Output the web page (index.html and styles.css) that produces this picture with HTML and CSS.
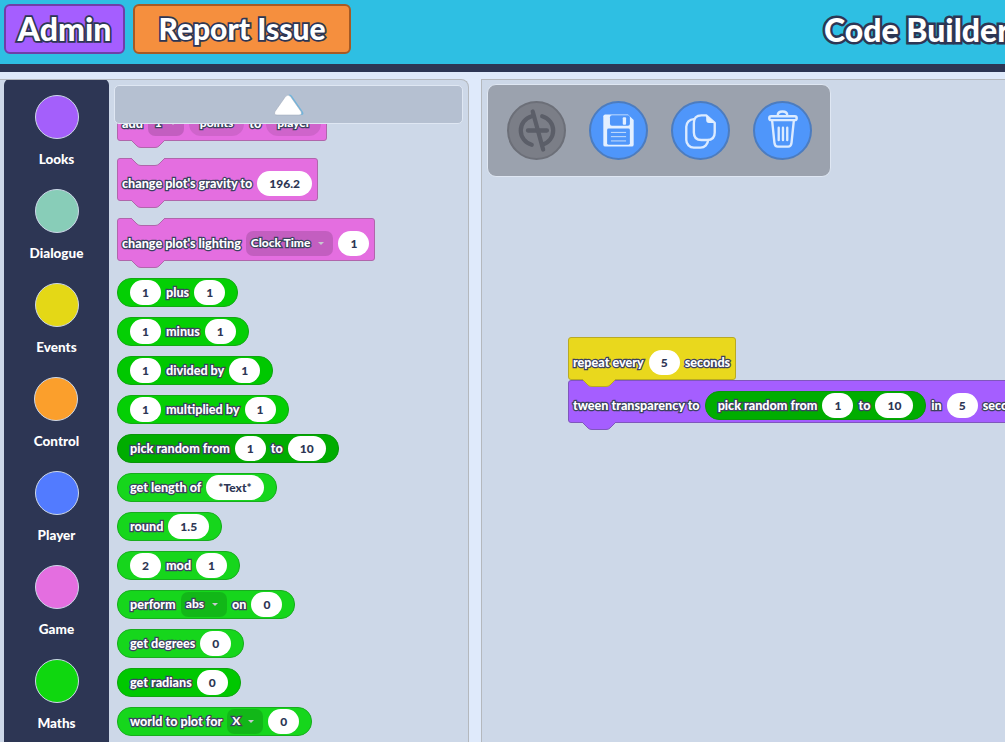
FILE: index.html
```html
<!DOCTYPE html>
<html lang="en">
<head>
  <meta charset="UTF-8">
  <title>Code Builder</title>
  <link rel="stylesheet" href="styles.css">
</head>
<body>
  <svg class="defs" width="0" height="0">
    <symbol id="tab" viewBox="0 0 34 8"><path d="M0 0 L6 6 Q7.5 7.5 10 7.5 H24 Q26.5 7.5 28 6 L34 0"/></symbol>
  </svg>

  <header class="topbar">
    <button class="top-btn admin">Admin</button>
    <button class="top-btn report">Report Issue</button>
    <h1 class="title">Code Builder</h1>
  </header>
  <div class="stripe"></div>

  <main class="main">
    <section class="panel library">
      <nav class="cats">
        <a class="cat"><span class="dot looks"></span>Looks</a>
        <a class="cat"><span class="dot dialogue"></span>Dialogue</a>
        <a class="cat"><span class="dot events"></span>Events</a>
        <a class="cat"><span class="dot control"></span>Control</a>
        <a class="cat"><span class="dot player"></span>Player</a>
        <a class="cat"><span class="dot game"></span>Game</a>
        <a class="cat"><span class="dot maths"></span>Maths</a>
      </nav>

      <div class="palette">
        <div class="block stack pink">
          <span class="lbl">add</span><span class="drop short">1<i class="caret"></i></span><span class="drop slot">points</span><span class="lbl">to</span><span class="drop slot">player</span>
          <svg class="tab"><use href="#tab"/></svg>
        </div>
        <div class="block stack pink">
          <svg class="notch"><use href="#tab"/></svg>
          <span class="lbl">change plot's gravity to</span><span class="num">196.2</span>
          <svg class="tab"><use href="#tab"/></svg>
        </div>
        <div class="block stack pink">
          <svg class="notch"><use href="#tab"/></svg>
          <span class="lbl">change plot's lighting</span><span class="drop wide">Clock Time<i class="caret"></i></span><span class="num">1</span>
          <svg class="tab"><use href="#tab"/></svg>
        </div>

        <div class="block pill g1"><span class="num">1</span><span class="lbl">plus</span><span class="num">1</span></div>
        <div class="block pill g1"><span class="num">1</span><span class="lbl">minus</span><span class="num">1</span></div>
        <div class="block pill g2"><span class="num">1</span><span class="lbl">divided by</span><span class="num">1</span></div>
        <div class="block pill g1"><span class="num">1</span><span class="lbl">multiplied by</span><span class="num">1</span></div>
        <div class="block pill g3"><span class="lbl">pick random from</span><span class="num">1</span><span class="lbl">to</span><span class="num">10</span></div>
        <div class="block pill g4"><span class="lbl">get length of</span><span class="num">*Text*</span></div>
        <div class="block pill g4"><span class="lbl">round</span><span class="num">1.5</span></div>
        <div class="block pill g4"><span class="num">2</span><span class="lbl">mod</span><span class="num">1</span></div>
        <div class="block pill g4"><span class="lbl">perform</span><span class="drop">abs<i class="caret"></i></span><span class="lbl">on</span><span class="num">0</span></div>
        <div class="block pill g4"><span class="lbl">get degrees</span><span class="num">0</span></div>
        <div class="block pill g2"><span class="lbl">get radians</span><span class="num">0</span></div>
        <div class="block pill g4"><span class="lbl">world to plot for</span><span class="drop">X<i class="caret"></i></span><span class="num">0</span></div>
      </div>

      <button class="scroll-up" aria-label="Scroll up">
        <svg width="32" height="24" viewBox="0 0 32 24">
          <path class="arrow-edge" d="M14 3 Q17 0 19 3 L30 19 Q31.500 22 28 22 H5 Z"/>
          <path class="arrow-face" d="M12.500 3.500 Q15 0.500 17.500 3.500 L28 18.500 Q29.500 22 26 22 H4 Q0.500 22 2 18.500 Z"/>
        </svg>
      </button>
    </section>

    <section class="panel canvas">
      <div class="tools">
        <button class="tool off" aria-label="Link">
          <svg viewBox="0 0 58 58"><path d="M24 14 A15.500 15.500 0 0 0 24 44 M35 14 A15.500 15.500 0 0 1 35 44 M20 29 H40"/><path d="M25 9 L36 49"/></svg>
        </button>
        <button class="tool" aria-label="Save">
          <svg viewBox="0 0 58 58">
            <path class="solid" d="M15 12 H39 L45 18 V44 Q45 46 43 46 H15 Q13 46 13 44 V14 Q13 12 15 12 Z"/>
            <rect class="hole" x="20" y="13" width="21" height="11" rx="2"/>
            <rect class="solid" x="33.500" y="15" width="3.500" height="8" rx="1"/>
            <rect class="hole" x="17" y="27" width="24" height="17" rx="1.500"/>
            <path class="thin" d="M21 31 H37 M21 35.500 H37 M21 40 H37"/>
          </svg>
        </button>
        <button class="tool" aria-label="Copy">
          <svg viewBox="0 0 58 58">
            <rect class="line" x="14" y="17" width="23" height="30" rx="8"/>
            <path class="line front" d="M30 13 H35 L44 21 V31 Q44 39 36 39 H30 Q22 39 22 31 V21 Q22 13 30 13 Z"/>
            <path class="solid" d="M35 13 L44 21 H38 Q35 21 35 18 Z"/>
          </svg>
        </button>
        <button class="tool" aria-label="Delete">
          <svg viewBox="0 0 58 58">
            <path class="line" d="M24 13 Q24 9 29 9 Q34 9 34 13"/>
            <rect class="line" x="15" y="14" width="29" height="4" rx="2"/>
            <path class="line" d="M18 18 L20.500 42 Q21 46 24 46 H35 Q38 46 38.500 42 L41 18"/>
            <path class="line" d="M25 26 V39 M29.500 26 V39 M34 26 V39"/>
          </svg>
        </button>
      </div>

      <div class="script">
        <div class="block stack yellow hat">
          <span class="lbl">repeat every</span><span class="num">5</span><span class="lbl">seconds</span>
          <svg class="tab"><use href="#tab"/></svg>
        </div>
        <div class="block stack purple">
          <span class="lbl">tween transparency to</span>
          <div class="block pill g3 nested"><span class="lbl">pick random from</span><span class="num">1</span><span class="lbl">to</span><span class="num">10</span></div>
          <span class="lbl">in</span><span class="num">5</span><span class="lbl">seconds</span>
          <svg class="tab"><use href="#tab"/></svg>
        </div>
      </div>
    </section>
  </main>
</body>
</html>
```

FILE: styles.css
```css
* { box-sizing: border-box; }
html, body { height: 100%; }
body { margin: 0; overflow: hidden; display: flex; flex-direction: column; background: #dfeafb; font-family: Lato, "Open Sans", sans-serif; font-weight: 900; }
button { font-family: inherit; font-weight: inherit; padding: 0; cursor: pointer; }
.defs { position: absolute; }

/* header */
.topbar { height: 64px; flex: none; display: flex; align-items: flex-start; gap: 8px; padding: 4px; background: #2ebfe3; overflow: hidden; }
.top-btn { height: 50px; flex: none; padding-bottom: 2px; border-radius: 6px; border: 2px solid; color: #fff; font-size: 30px; -webkit-text-stroke: 3.5px #2d3654; paint-order: stroke fill; }
.admin { width: 121px; font-size: 32px; background: #a55eff; border-color: #6f3fa8; }
.report { width: 218px; background: #f58f3e; border-color: #a65a24; }
.title { flex: none; margin: 6px 0 0 465px; font-size: 32px; font-weight: 900; color: #fff; white-space: nowrap; -webkit-text-stroke: 5px #2d3654; paint-order: stroke fill; }
.stripe { height: 8px; flex: none; background: #2d3654; }

/* panels */
.main { flex: 1; min-height: 0; display: flex; gap: 12px; padding-top: 7px; }
.panel { position: relative; background: #cdd8e8; border: 1px solid #b4b8bd; border-bottom: 0; border-radius: 6px 6px 0 0; overflow: hidden; }
.library { width: 469px; flex: none; display: flex; border-left: 0; border-radius: 0 8px 0 0; padding-left: 4px; }
.canvas { flex: 1; border-right: 0; border-radius: 0; }

/* category list */
.cats { width: 105px; flex: none; margin-top: -1px; display: flex; flex-direction: column; align-items: center; gap: 21px; padding-top: 16px; background: #2d3654; border-radius: 6px 6px 0 0; }
.cat { display: flex; flex-direction: column; align-items: center; gap: 12px; color: #fff; font-size: 13.5px; line-height: 16px; height: 73px; }
.dot { width: 44px; height: 44px; flex: none; border-radius: 50%; border: 1px solid #cdd8e8; }
.looks { background: #a45ffb; }
.dialogue { background: #88cdb8; }
.events { background: #e4d816; }
.control { background: #fb9f2c; }
.player { background: #527bff; }
.game { background: #e46ee0; }
.maths { background: #0fd70f; }

/* block palette */
.palette { flex: 1; display: flex; flex-direction: column; align-items: flex-start; gap: 10px; padding: 18px 0 0 8px; }
.palette .stack { margin-bottom: 7px; }
.scroll-up { position: absolute; z-index: 3; left: 114px; top: 5px; width: 349px; height: 39px; display: flex; align-items: center; justify-content: center; background: #b5c0d1; border: 1px solid #dfe7f3; border-radius: 5px; }
.arrow-edge { fill: #6fb4dc; }
.arrow-face { fill: #fff; stroke: #9aa4b4; stroke-width: 0.5; }

/* blocks */
.block { position: relative; flex: none; display: inline-flex; align-items: center; gap: 5px; border: 1px solid var(--edge); background: var(--fill); font-size: 12px; white-space: nowrap; }
.lbl { color: #fff; font-size: 12.6px; -webkit-text-stroke: 2.5px #3d4260; paint-order: stroke fill; }
.num { height: 25px; min-width: 31px; padding: 0 12px; display: flex; align-items: center; justify-content: center; border-radius: 13px; background: #fff; color: #2d3654; }
.drop { height: 25px; display: flex; align-items: center; gap: 8px; padding: 0 9px 2px 5px; border-radius: 7px; background: rgba(0, 0, 0, 0.14); color: #fff; -webkit-text-stroke: 2.5px #3d4260; paint-order: stroke fill; }
.short { padding: 0 8px 2px 7px; gap: 8px; }
.slot { padding: 0 11px 2px; border-radius: 12px; background: rgba(0, 0, 0, 0.09); }
.caret { width: 0; height: 0; margin-top: 2px; border: 3px solid transparent; border-top: 3px solid #c8c8d0; border-bottom: 0; -webkit-text-stroke: 0; }

.stack { height: 43px; padding: 8px 5px 0 4px; border-radius: 3px; z-index: 1; }
.pill { height: 29px; padding: 0 12px; border-radius: 14px; }
.tab, .notch { position: absolute; left: 13px; width: 34px; height: 8px; overflow: visible; }
.tab { bottom: -8px; fill: var(--fill); stroke: var(--edge); stroke-width: 1; }
.notch { top: -1px; fill: #cdd8e8; stroke: var(--edge); stroke-width: 1; }

.pink { --fill: #e46ee0; --edge: #b066ab; }
.yellow { --fill: #e9d81d; --edge: #b8a924; }
.purple { --fill: #a55eff; --edge: #7f57bc; }
.g1 { --fill: #04cf04; --edge: #14a814; }
.g2 { --fill: #00c800; --edge: #10a510; }
.g3 { --fill: #00ad00; --edge: #0a940a; }
.g4 { --fill: #16d61c; --edge: #18ad1e; }

/* workspace */
.tools { position: absolute; left: 5px; top: 4px; width: 344px; height: 93px; display: flex; align-items: center; gap: 23px; padding-left: 19px; background: #9ba2ae; border: 1px solid #dfe7f3; border-radius: 9px; }
.tool { width: 59px; height: 59px; flex: none; border-radius: 50%; border: 2px solid #4c7cbf; background: #4f96fa; }
.tool svg { display: block; width: 55px; height: 55px; fill: none; }
.solid { fill: #e4f0ff; }
.hole { fill: #4f96fa; }
.thin { stroke: #cfe2fb; stroke-width: 1; }
.line { stroke: #dcebff; stroke-width: 2.5; fill: none; stroke-linecap: round; stroke-linejoin: round; }
.front { fill: #4f96fa; }
.off { background: #7b7e87; border-color: #6c6f78; }
.off path { stroke: #5b5e68; stroke-width: 4.500; stroke-linecap: round; fill: none; }

.script { position: absolute; left: 86px; top: 257px; display: flex; flex-direction: column; align-items: flex-start; }
.hat { z-index: 2; }
.purple { padding-right: 40px; }
```
